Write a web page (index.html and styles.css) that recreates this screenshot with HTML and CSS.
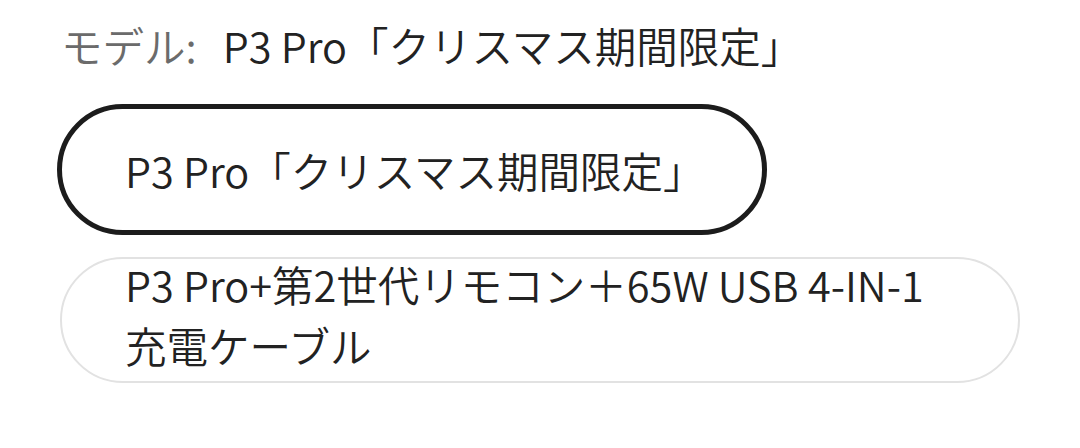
FILE: index.html
```html
<!DOCTYPE html>
<html lang="ja">
<head>
<meta charset="utf-8">
<link rel="stylesheet" href="styles.css">
</head>
<body>
<div class="picker">
  <div class="title"><span class="label">モデル:</span><span class="value">P3 Pro「クリスマス期間限定」</span></div>
  <div class="option selected">P3 Pro「クリスマス期間限定」</div>
  <div class="option plain"><div class="plain-text">P3 Pro+第2世代リモコン＋65W USB 4-IN-1 充電ケーブル</div></div>
</div>
</body>
</html>
```
FILE: styles.css
```css
html, body {
  margin: 0;
  padding: 0;
  background: #ffffff;
}
body {
  font-family: "Noto Sans CJK JP", "Noto Sans", sans-serif;
  font-size: 41.5px;
  font-weight: 350;
  color: #222222;
}
.picker {
  display: flex;
  flex-direction: column;
  align-items: flex-start;
  padding: 17px 0 0 57px;
}
.title {
  line-height: 56px;
  padding-left: 4px;
  white-space: nowrap;
}
.label {
  color: #6b6b6b;
}
.value {
  margin-left: 26px;
}
.option {
  box-sizing: border-box;
  border-radius: 999px;
  background: #fff;
}
.selected {
  margin-top: 31px;
  width: 710px;
  height: 131px;
  border: 5px solid #1c1c1c;
  display: flex;
  align-items: center;
  padding-left: 63px;
  line-height: 56px;
}
.plain {
  margin-top: 22px;
  margin-left: 3px;
  width: 960px;
  height: 126px;
  border: 2px solid #e2e2e2;
  padding: 0 60px 0 63px;
  line-height: 61px;
}
.plain-text {
  margin-top: -5px;
}
```
